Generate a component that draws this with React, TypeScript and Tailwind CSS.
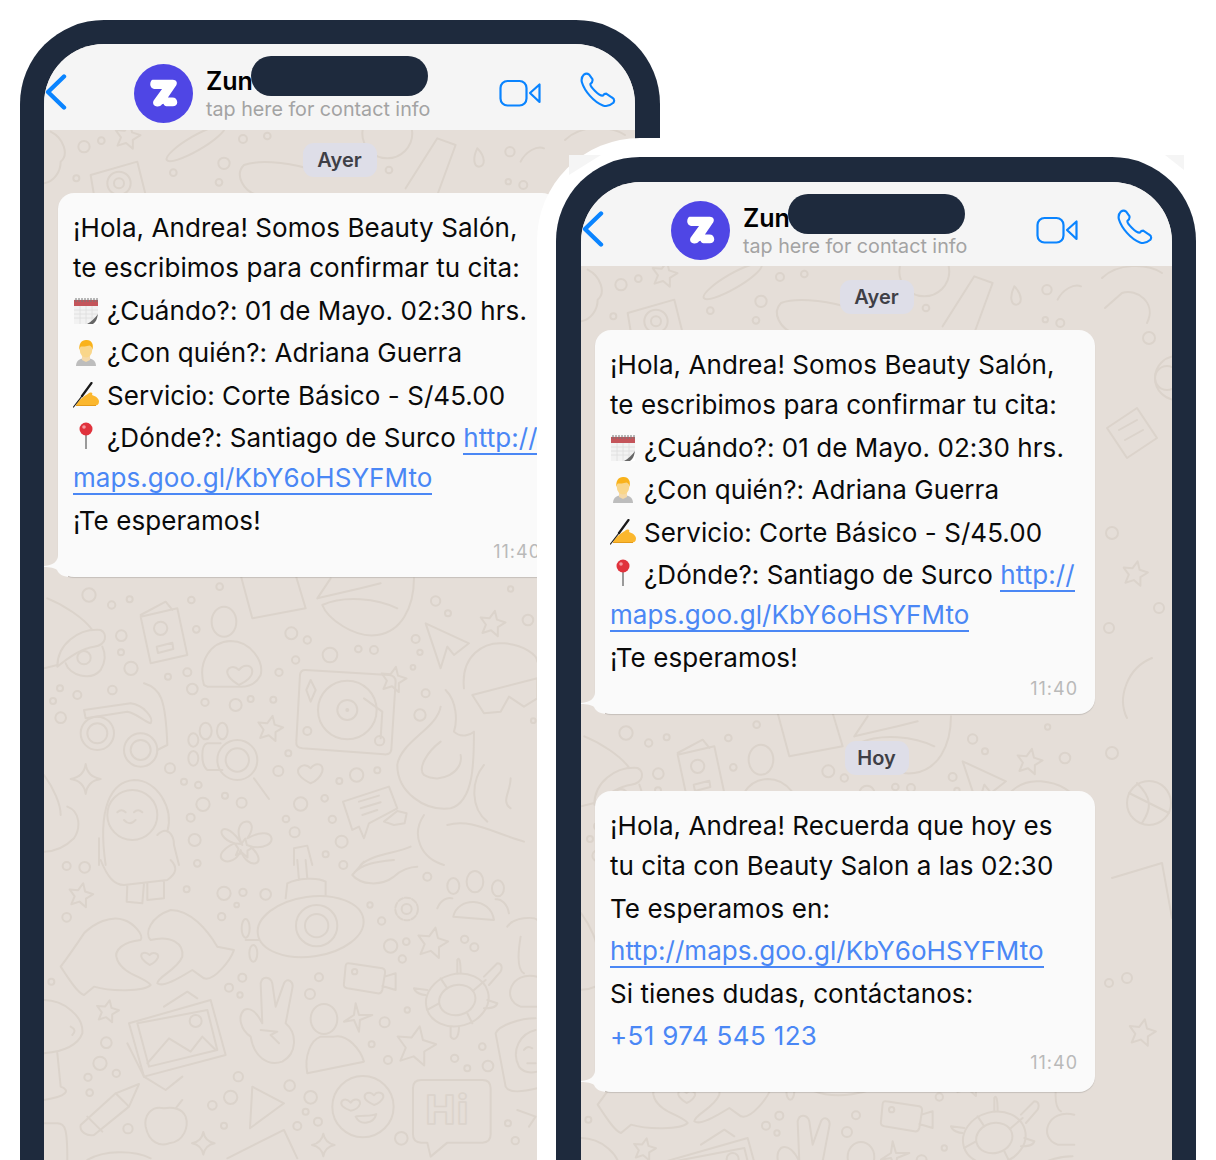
import React from 'react';

const FONT = "font-['Inter','Noto_Sans',sans-serif]";

type C = [number, number, number];

const topDots: C[] = [[120,65,17],[172,47,10],[97,160,9],[597,42,12],[670,33,10],[540,115,17],[388,143,10],[525,172,10],[1398,80,14],[1035,135,10],[1393,170,8],[1438,180,12]];
const midDots: C[] = [[135,60,20],[203,90,11],[257,73,9],[232,182,16],[231,232,9],[261,280,20],[442,75,10],[527,35,10],[457,163,10],[372,305,9],[430,292,12],[445,342,16],[483,382,11],[575,390,18],[620,372,9],[688,374,9],[705,292,11],[755,255,11],[742,175,18],[790,195,11],[858,240,22],[943,222,10],[990,225,12],[1115,192,12],[1128,232,8],[1107,277,7],[1175,78,14],[1212,115,9],[1400,42,8],[1452,135,16],[1145,355,12],[1128,420,17],[1468,437,7],[48,340,9],[100,360,12],[27,378,9],[205,345,13],[50,428,16],[378,580,15],[420,620,9],[463,630,10],[543,662,9],[477,688,20],[593,683,15],[440,728,12],[452,795,18],[733,535,9],[703,588,15],[886,618,9],[938,600,20],[1000,586,9],[842,670,10],[770,687,20],[726,732,10],[865,733,11],[752,772,15],[893,800,18],[845,838,9]];
const lowDots: C[] = [[68,18,12],[122,22,16],[460,10,10],[428,88,9],[540,100,20],[597,97,11],[665,103,16],[578,135,7],[533,170,11],[68,172,13],[898,15,12],[1150,50,12],[978,135,8],[1013,183,11],[1040,258,20],[1087,245,10],[1075,297,11],[1262,238,11],[1291,262,12],[595,353,12],[555,383,12],[588,405,8],[825,352,12],[798,402,15],[1022,487,15],[983,553,9],[1090,450,8],[1032,600,12],[1315,560,10],[1232,595,11],[1270,625,9],[1332,618,16],[22,365,9],[187,548,16],[168,610,20],[132,652,11],[217,640,11],[137,698,10],[583,650,14],[737,677,16],[800,712,19],[785,755,9],[822,785,12],[760,798,12],[560,712,20],[505,736,13],[540,797,9],[252,806,14],[1072,835,19],[1392,790,9],[1414,842,11]];

const star = (cx: number, cy: number, r: number) => {
  let d = '';
  for (let i = 0; i < 10; i++) {
    const a = -Math.PI / 2 + 0.2 + (i * Math.PI) / 5;
    const rr = i % 2 ? r * 0.48 : r;
    d += `${i ? 'L' : 'M'}${(cx + rr * Math.cos(a)).toFixed(1)} ${(cy + rr * Math.sin(a)).toFixed(1)}`;
  }
  return d + 'Z';
};

const sparkle = (x: number, y: number, r: number) =>
  `M${x} ${y - r}Q${x + 5} ${y - 6} ${x + r} ${y}Q${x + 5} ${y + 6} ${x} ${y + r}Q${x - 5} ${y + 6} ${x - r} ${y}Q${x - 5} ${y - 6} ${x} ${y - r}Z`;

const dots = (list: C[]) => list.map(([x, y, r]) => <circle key={`${x}-${y}`} cx={x} cy={y} r={r} />);

// wallpaper, coordinates read off 3x crops of the first phone
const Doodles = ({ showHi }: { showHi: boolean }) => (
  <svg className="absolute left-0 top-0" width="591" height="1116" viewBox="44 44 591 1116" fill="none" stroke="#dbd3cb" strokeLinecap="round" strokeLinejoin="round">
    <g transform="translate(44 125) scale(0.3333)" strokeWidth="6">
      {dots(topDots)}
      <path d="M20 20C60 40 75 90 50 110C50 140 30 170 0 175" />
      <path d="M140 150L280 110L305 210H150Z" />
      <circle cx="225" cy="175" r="35" />
      <circle cx="225" cy="175" r="15" />
      <path d={star(250, 35, 40)} />
      <ellipse cx="455" cy="55" rx="100" ry="22" transform="rotate(-30 455 55)" />
      <path d="M1085 190L1180 40L1235 60L1180 210" />
      <circle cx="1030" cy="25" r="75" />
      <path d="M1300 70C1285 100 1290 125 1305 125C1325 125 1325 95 1300 70Z" />
      <path d="M600 120C640 105 720 110 790 130M600 120C570 150 600 200 640 210" />
      <path d="M1430 110C1445 80 1480 60 1500 70" />
    </g>
    <g transform="translate(44 575) scale(0.3333)" strokeWidth="6">
      {dots(midDots)}
      <path d="M290 125L400 100L430 240L320 265ZM290 120L365 80L385 105" />
      <circle cx="350" cy="160" r="20" />
      <path d="M338 215L385 203L388 222L342 234Z" />
      <ellipse cx="540" cy="140" rx="37" ry="45" />
      <path d="M480 330C460 260 500 200 560 198C620 198 660 260 650 300C640 320 620 335 590 335H490Z" />
      <path d="M585 330C560 315 540 295 555 280C570 270 580 280 585 285C600 265 625 270 625 290C625 305 605 320 585 330Z" />
      <path d="M590 0L625 130L785 100L755 0" />
      <path d="M40 275C40 210 100 160 170 165C190 175 190 210 150 215C110 220 70 250 40 275Z" />
      <path d="M65 265C75 300 140 320 170 285C185 260 185 235 175 215" />
      <circle cx="120" cy="248" r="20" />
      <path d="M10 70C60 90 120 130 145 165M0 280L40 270" />
      <circle cx="160" cy="475" r="50" />
      <circle cx="160" cy="475" r="30" />
      <circle cx="290" cy="525" r="50" />
      <circle cx="290" cy="525" r="30" />
      <path d="M120 405L260 385C300 390 330 430 320 445C300 440 280 415 250 410L125 430Z" />
      <path d="M300 325C350 340 365 370 370 510L340 525" />
      <ellipse cx="485" cy="468" rx="18" ry="25" />
      <ellipse cx="535" cy="468" rx="16" ry="25" />
      <ellipse cx="448" cy="495" rx="15" ry="20" />
      <ellipse cx="448" cy="550" rx="15" ry="22" />
      <circle cx="580" cy="555" r="60" />
      <circle cx="580" cy="555" r="35" />
      <path d="M630 610L675 672M530 505H490C470 510 470 570 490 585H535" />
      <path d={star(678, 462, 40)} />
      <path d="M785 285L1035 300Q1055 302 1055 320L1042 525Q1040 540 1020 538L775 520Q755 518 757 500L768 300Q770 284 785 285Z" />
      <circle cx="910" cy="405" r="88" />
      <circle cx="910" cy="405" r="30" />
      <circle cx="910" cy="405" r="3" />
      <circle cx="790" cy="468" r="12" />
      <circle cx="1007" cy="497" r="14" />
      <path d="M960 370L1015 410L1010 490M800 315L815 345L800 380L787 345Z" />
      <path d={star(1048, 315, 40)} />
      <path d="M835 90C850 130 930 190 1000 180C1070 170 1110 100 1110 10M835 90C900 60 1000 70 1060 100M820 70L860 10M820 70L950 40L1010 25" />
      <path d="M1145 145L1275 205L1230 240L1210 215L1190 280Z" />
      <path d={star(1345, 147, 40)} />
      <path d="M1260 340C1250 240 1320 200 1380 205C1440 210 1480 240 1480 260" />
      <path d="M1285 360L1480 310V370L1440 395L1395 365L1370 410L1320 415Z" />
      <path d="M1205 345C1240 380 1240 440 1230 470C1250 490 1280 480 1290 470M1190 395C1180 460 1070 500 1060 570C1060 650 1140 710 1220 700C1290 680 1290 560 1290 470M1190 500C1150 530 1120 580 1140 600C1190 630 1260 590 1250 540" />
      <path d="M800 625C770 610 750 590 770 575C785 565 795 575 800 580C815 560 840 565 835 590C830 605 815 620 800 625Z" />
      <path d="M897 680L1035 635L1060 700L975 745L960 790L945 755L925 765Z" />
      <path d="M945 680L1005 662M950 700L1010 682M955 720L1000 705M1020 740L1060 708L1088 715L1082 745L1050 750Z" />
      <circle cx="265" cy="720" r="75" />
      <path d="M220 712Q232 700 245 712M270 712Q282 700 295 712M240 735Q258 755 275 735" />
      <path d="M185 870C160 700 200 620 270 615C340 615 390 700 370 770M340 780C370 750 390 780 390 810L405 870" />
      <path d="M165 790V870M70 695C110 710 110 760 90 790C60 820 30 830 0 830" />
      <path d="M595 810C550 720 660 720 610 790C700 740 710 830 620 815C680 870 610 890 590 825C570 890 480 850 570 805C500 780 540 720 595 810Z" />
      <path d={star(598, 820, 30)} />
      <path d={sparkle(125, 612, 45)} />
      <path d="M0 600C30 640 50 690 50 720M1140 720C1100 780 1130 850 1200 870M1210 750C1280 730 1340 770 1440 800M1320 570C1280 620 1280 700 1330 740M1400 610C1400 650 1370 680 1400 700" />
      <path d="M750 870V820L790 812L805 870M950 870C990 835 1060 835 1100 815" />
    </g>
    <g transform="translate(44 860) scale(0.3333)" strokeWidth="6">
      {dots(lowDots)}
      <path d="M170 0C190 50 210 75 240 75L370 60C400 40 400 20 380 0M250 75L248 125L295 130L300 70M310 70V120L360 115V65" />
      <path d={star(110, 107, 38)} />
      <path d="M50 320C70 350 100 400 120 405L150 380C200 395 300 395 320 375C300 350 240 345 220 300C205 270 240 245 290 240C300 225 270 190 240 180C200 165 150 190 120 220C100 250 80 280 50 320Z" />
      <path d="M570 270C560 300 510 365 480 355L445 330C420 345 360 385 340 370C340 350 400 330 415 290C420 250 380 225 320 240C300 220 320 170 380 150C440 150 490 210 520 260Z" />
      <path d="M317 315C300 305 285 290 295 280C305 275 312 280 317 285C325 275 345 278 342 292C338 302 328 310 317 315Z" />
      <ellipse cx="800" cy="200" rx="160" ry="90" transform="rotate(-8 800 200)" />
      <circle cx="818" cy="197" r="62" />
      <circle cx="818" cy="197" r="35" />
      <path d="M725 115L730 70C760 55 820 50 845 65L845 105M760 0L765 60M785 0L790 55" />
      <ellipse cx="605" cy="205" rx="12" ry="28" />
      <ellipse cx="628" cy="280" rx="12" ry="25" />
      <path d="M605 240H645" />
      <circle cx="1088" cy="147" r="34" strokeDasharray="16 6" />
      <circle cx="1088" cy="147" r="15" />
      <path d="M1050 0C1000 5 950 10 925 45C950 75 1010 80 1050 50C1070 30 1100 20 1120 20M925 45L960 5" />
      <ellipse cx="1293" cy="65" rx="25" ry="32" />
      <path d="M1228 170C1240 110 1340 110 1350 180ZM1180 145C1190 120 1210 110 1225 115M1395 160C1390 130 1370 115 1355 118" />
      <ellipse cx="1228" cy="78" rx="18" ry="24" />
      <ellipse cx="1362" cy="85" rx="18" ry="24" />
      <path d={star(1165, 250, 48)} />
      <path d={star(190, 455, 35)} />
      <path d="M915 310L1015 325Q1025 328 1023 340L1015 390Q1012 402 1000 400L910 385Q897 382 900 370L905 318Q906 308 915 310ZM1022 350L1055 340V390L1015 378" />
      <circle cx="932" cy="335" r="8" />
      <ellipse cx="1240" cy="420" rx="95" ry="78" transform="rotate(-15 1240 420)" />
      <ellipse cx="1240" cy="420" rx="55" ry="45" transform="rotate(-15 1240 420)" />
      <path d="M1185 430L1150 450M1290 390L1325 360M1210 385L1190 355M1270 460L1285 490M1320 350L1360 310C1375 310 1375 325 1370 335L1335 375M1240 340V300C1245 290 1250 300 1250 340M1150 390L1110 385C1115 400 1135 405 1145 405M1330 420L1360 430C1355 445 1335 445 1320 445M1220 500V530C1230 545 1245 535 1245 500" />
      <path d="M1475 475C1430 475 1365 495 1355 520L1385 680C1395 700 1440 695 1480 685" />
      <path d="M1475 510C1430 520 1400 570 1425 620C1440 640 1460 640 1480 635M1440 570Q1450 555 1465 565M1450 610H1475" />
      <path d="M255 490L500 420L545 585L300 650Z" />
      <path d="M280 490L490 450L520 570L315 620Z" />
      <path d="M310 610L375 535L440 575L475 530L515 570M360 440L430 395L460 415M250 550L300 650L365 690L415 650" />
      <circle cx="455" cy="483" r="18" />
      <path d="M655 490L650 370C655 345 680 350 685 370L695 440L720 370C730 350 750 365 745 385L725 490C760 520 760 580 715 605C670 620 630 590 620 530C590 510 580 470 600 450C620 440 640 460 655 490ZM650 510L700 515L680 525L705 550" />
      <ellipse cx="840" cy="477" rx="40" ry="45" />
      <path d="M790 640C780 590 800 540 830 530L870 530C910 520 950 570 960 605Z" />
      <path d="M935 430L945 465L985 465L948 480L945 515L930 480L900 485L930 465Z" />
      <path d={star(1115, 560, 62)} />
      <path d="M0 420C60 420 120 470 115 520C100 560 50 575 0 580M40 580L50 680C80 690 70 710 0 720M80 500Q100 510 85 525" />
      <path d="M110 795L215 700L285 672L255 740L150 825C130 830 105 815 110 795ZM130 770L175 815M215 700L255 740" />
      <path d="M360 745C320 735 300 770 305 800C315 850 350 860 375 850C420 845 435 800 425 770C415 745 385 740 360 745ZM395 745L415 720" />
      <path d="M625 680L720 730L618 805Z" />
      <circle cx="957" cy="740" r="92" />
      <path d="M920 752C900 745 885 735 895 722C905 715 915 722 920 728C930 712 950 718 948 732C945 742 932 750 920 752Z" />
      <path d="M990 735C970 725 955 715 965 702C975 695 985 700 990 706C1000 692 1020 698 1018 712C1015 722 1002 732 990 735Z" />
      <path d="M935 770C950 765 985 770 997 762C990 790 950 800 935 770Z" />
      <path d="M1132 660H1315Q1340 660 1340 685V823Q1340 848 1315 848H1210L1160 890L1150 848H1132Q1107 848 1107 823V685Q1107 660 1132 660Z" />
      {showHi && <text x="1145" y="792" fontFamily="Inter, sans-serif" fontWeight="800" fontSize="118" strokeWidth="5" letterSpacing="6">Hi</text>}
      <path d={sparkle(478, 850, 34)} />
      <path d={sparkle(838, 855, 34)} />
      <path d="M550 895L720 810L760 895M0 790H40C65 790 70 810 70 900M130 900C180 870 270 870 320 895M1390 200C1410 170 1470 170 1480 180M1430 230C1420 290 1420 330 1440 340M1480 350C1400 330 1370 420 1430 440L1480 440" />
      <path d="M1420 750L1475 770L1455 800" />
    </g>
    {/* gutter on the right, only visible on the second phone */}
    <g strokeWidth="2">
      <circle cx="640" cy="240" r="22" />
      <circle cx="612" cy="200" r="6" />
      <path d="M570 290L600 270L620 300L590 320Z M582 292L600 282 M588 302L606 292" />
      <circle cx="630" cy="240" r="12" />
      <path d={star(598, 436, 13)} />
      <circle cx="575" cy="395" r="6" />
      <circle cx="622" cy="470" r="5" />
      <circle cx="572" cy="490" r="5" />
      <path d="M615 520C590 530 580 560 590 580" />
      <circle cx="612" cy="665" r="22" />
      <path d="M592 655L632 675M600 645C615 660 615 670 605 685" />
      <circle cx="575" cy="615" r="6" />
      <path d="M575 740L625 725L635 780" />
      <circle cx="590" cy="840" r="5" />
      <path d={star(605, 895, 14)} />
      <circle cx="572" cy="845" r="4" />
      <path d="M565 140C580 125 610 125 625 135" />
      <path d="M568 170L585 155C600 150 620 165 610 185" />
    </g>
  </svg>
);

const ZLogo = () => (
  <svg width="59" height="59" viewBox="0 0 60 60" className="shrink-0">
    <circle cx="30" cy="30" r="30" fill="#4f46e5" />
    <path d="M19 16H39.5C43 16 44.5 19 43 21.5L34.5 34H39C42 34 44 36 44 39C44 41.5 42 43 39.5 43H33C31.5 43 30.5 42 30 40.5L28.5 41C27 43 25 43.5 22.5 43C20 42.5 18.5 39.5 20 37L28.5 25.5H22C18.5 25.5 16.5 23 16.5 20.5C16.5 18 18 16 19 16Z" fill="#fff" />
  </svg>
);

const HeaderIcons = () => (
  <>
    <svg width="42" height="28" viewBox="0 0 42 28" fill="none" stroke="#0a84ff" strokeWidth="2.2" strokeLinejoin="round" className="shrink-0">
      <rect x="1.5" y="2" width="26" height="24.5" rx="7" />
      <path d="M31 14L40.5 5.5V23Z" />
    </svg>
    <svg width="36" height="36" viewBox="350 204 110 110" fill="none" stroke="#0a84ff" strokeWidth="6.5" strokeLinejoin="round" className="mb-[5px] ml-[39px] shrink-0">
      <path d="M362 212Q352 222 356 236C364 262 392 296 420 306Q436 312 452 298Q458 288 448 282L430 270Q424 270 420 276Q412 278 396 262C384 250 380 244 382 240Q390 234 388 226L378 212Q370 206 362 212Z" />
    </svg>
  </>
);

const Header = ({ h }: { h: string }) => (
  <div className={`relative flex shrink-0 items-center bg-[#f5f5f5] pl-[1px] pr-[19px] ${h}`}>
    <svg width="24" height="38" viewBox="0 0 24 38" fill="none" stroke="#0a84ff" strokeWidth="4.4" strokeLinecap="round" strokeLinejoin="round" className="mt-[10px] shrink-0">
      <path d="M19 3.5L3 19L19 34.5" />
    </svg>
    <div className="ml-[65px] mt-[12px]">
      <ZLogo />
    </div>
    <div className="ml-[13px] mt-[12px] flex flex-col">
      <span className="text-[25px] font-semibold leading-[30px] text-black">Zun</span>
      <span className="mt-[1px] text-[19.7px] leading-[24px] text-[#a3a3a3]">tap here for contact info</span>
    </div>
    <div className="ml-auto mt-[11px] flex items-center">
      <HeaderIcons />
    </div>
  </div>
);

const Pill = ({ label, className }: { label: string; className: string }) => (
  <div className={`flex h-[34px] items-center justify-center self-center rounded-[11px] bg-[#dedee8] text-[20px] font-semibold text-[#3f3f46] ${className}`}>
    {label}
  </div>
);

const Calendar = () => (
  <svg width="26" height="28" viewBox="0 0 26 28" className="mr-[8px] inline-block align-[-5px]">
    <rect x="1" y="2" width="24" height="25" fill="#f2f2f2" />
    <rect x="1" y="3" width="24" height="6" fill="#c4545a" />
    <path d="M3 1v4M6 1v4M9 1v4M12 1v4M15 1v4M18 1v4M21 1v4M24 1v4" stroke="#777" strokeWidth="1" />
    <path d="M1 13H25M1 17H25M1 21H25M7 9V27M13 9V27M19 9V27" stroke="#ddd" strokeWidth="0.8" />
    <path d="M25 17L16 27H25Z" fill="#fff" />
    <path d="M14 27C18 25 22 21 25 17C24 22 23 25 20 27Z" fill="#666" />
  </svg>
);

const Man = () => (
  <svg width="26" height="28" viewBox="0 0 26 28" className="mr-[8px] inline-block align-[-5px]">
    <path d="M3 27C3 21 8 19 13 19C18 19 23 21 23 27Z" fill="#bdbdbd" />
    <path d="M9 17H17V21L13 23L9 21Z" fill="#f5d9a8" />
    <ellipse cx="13" cy="11" rx="6.2" ry="7.5" fill="#f9d68a" />
    <path d="M6.5 11C5.5 5 8.5 1 13 1C18.5 0.5 21 5 19.5 11C19 8.5 18 7 16.5 6.5C13.5 7.5 9.5 7.5 8 7.5C7 8.5 7 10 6.5 11Z" fill="#f9b21b" />
  </svg>
);

const Hand = () => (
  <svg width="27" height="26" viewBox="0 0 27 26" className="mr-[7px] inline-block align-[-3px]">
    <path d="M3 23C6 17 12 14 16 11C19 10 20 11 19 13C22 14 26 16 26 19.5C26 22.5 24 23.5 22 23.5H4Z" fill="#fbb72e" />
    <path d="M3 23.5H23" stroke="#e49b1a" strokeWidth="1" />
    <path d="M0.5 25L9 14" stroke="#1a1a1a" strokeWidth="1.2" strokeLinecap="round" />
    <path d="M9 14L18.5 1" stroke="#1a1a1a" strokeWidth="2.2" strokeLinecap="round" />
  </svg>
);

const Pin = () => (
  <svg width="26" height="28" viewBox="0 0 26 28" className="mr-[8px] inline-block align-[-3px]">
    <rect x="12" y="10" width="2" height="17" fill="#9a9a9a" />
    <circle cx="13" cy="7" r="6.5" fill="#e0323c" />
    <circle cx="11" cy="5" r="1.8" fill="#f59aa0" />
  </svg>
);

const Link = ({ children }: { children: React.ReactNode }) => (
  <span className="border-b-2 border-[#4a87f5] text-[#4a87f5]">{children}</span>
);

const Tail = () => (
  <svg width="24" height="24" viewBox="0 0 24 24" className="absolute bottom-0 left-[-14px]">
    <path d="M14 2C14 8 10 12 0 13V14C6 14 11 15 13 17C15 21 18 23 24 24V2Z" fill="#fafafa" />
  </svg>
);

const Bubble = ({ children, timeTop, pt, pb }: { children: React.ReactNode; timeTop: string; pt: string; pb: string }) => (
  <div className={`relative ml-[14px] w-[500px] shrink-0 rounded-[16px] bg-[#fafafa] px-[15px] text-[26px] leading-[40px] tracking-[0.06px] text-[#0a0a0a] shadow-[0_1px_1px_rgba(0,0,0,0.14)] ${pt} ${pb}`}>
    <Tail />
    {children}
    <div className={`pr-[2px] text-right text-[18px] leading-[20px] tracking-[1px] text-[#b9b9b9] ${timeTop}`}>11:40</div>
  </div>
);

const Para = ({ children }: { children: React.ReactNode }) => <div className="mb-[2.5px]">{children}</div>;

const FirstMessage = () => (
  <Bubble timeTop="mt-[-1.25px]" pt="pt-[15.25px]" pb="pb-[15px]">
    <Para>¡Hola, Andrea! Somos Beauty Salón,<br />te escribimos para confirmar tu cita:</Para>
    <Para><Calendar />¿Cuándo?: 01 de Mayo. 02:30 hrs.</Para>
    <Para><Man />¿Con quién?: Adriana Guerra</Para>
    <Para><Hand />Servicio: Corte Básico - S/45.00</Para>
    <Para><Pin />¿Dónde?: Santiago de Surco <Link>http://</Link><br /><Link>maps.goo.gl/KbY6oHSYFMto</Link></Para>
    <Para>¡Te esperamos!</Para>
  </Bubble>
);

const Phone = ({ children, edge, headerH, showHi }: { children: React.ReactNode; edge: string; headerH: string; showHi: boolean }) => (
  <div className={`h-[1180px] w-[640px] rounded-t-[84px] border-[#1e2a3d] bg-[#1e2a3d] ${edge}`}>
    <div className="relative flex h-full flex-col overflow-hidden rounded-t-[60px] bg-[#e5ded8]">
      <Doodles showHi={showHi} />
      <Header h={headerH} />
      {children}
      <div className="absolute left-[207px] top-[12px] h-[40px] w-[177px] rounded-[20px] bg-[#1e2a3d]" />
    </div>
  </div>
);

export default function App() {
  return (
    <div className={`relative h-[1160px] w-[1216px] overflow-hidden bg-white ${FONT}`}>
      <div className="absolute left-[20px] top-[20px]">
        <Phone edge="border-l-[24px] border-r-[25px] border-t-[24px]" headerH="h-[86px]" showHi>
          <Pill label="Ayer" className="relative mt-[13px] w-[74px]" />
          <div className="relative mt-[16px] flex flex-col">
            <FirstMessage />
          </div>
        </Phone>
      </div>
      <div className="absolute left-[537px] top-[138px] rounded-t-[103px] bg-white p-[19px]">
        <svg width="650" height="30" viewBox="0 0 650 30" className="absolute left-[32px] top-[17px]" fill="#f5f5f5">
          <path d="M0 0H32L0 20Z" />
          <path d="M596 0H615V15Z" />
        </svg>
        <div className="relative">
          <Phone edge="border-l-[25px] border-r-[24px] border-t-[25px]" headerH="h-[84px]" showHi={false}>
            <Pill label="Ayer" className="relative mt-[14px] w-[74px]" />
            <div className="relative mt-[16px] flex flex-col">
              <FirstMessage />
            </div>
            <Pill label="Hoy" className="relative mt-[27px] w-[64px]" />
            <div className="relative mt-[16px] flex flex-col">
              <Bubble timeTop="mt-[-6px]" pt="pt-[15px]" pb="pb-[19px]">
                <Para>¡Hola, Andrea! Recuerda que hoy es<br />tu cita con Beauty Salon a las 02:30</Para>
                <Para>Te esperamos en:</Para>
                <Para><Link>http://maps.goo.gl/KbY6oHSYFMto</Link></Para>
                <Para>Si tienes dudas, contáctanos:</Para>
                <Para><span className="tracking-[0.35px] text-[#4a87f5]">+51 974 545 123</span></Para>
              </Bubble>
            </div>
          </Phone>
        </div>
      </div>
    </div>
  );
}
